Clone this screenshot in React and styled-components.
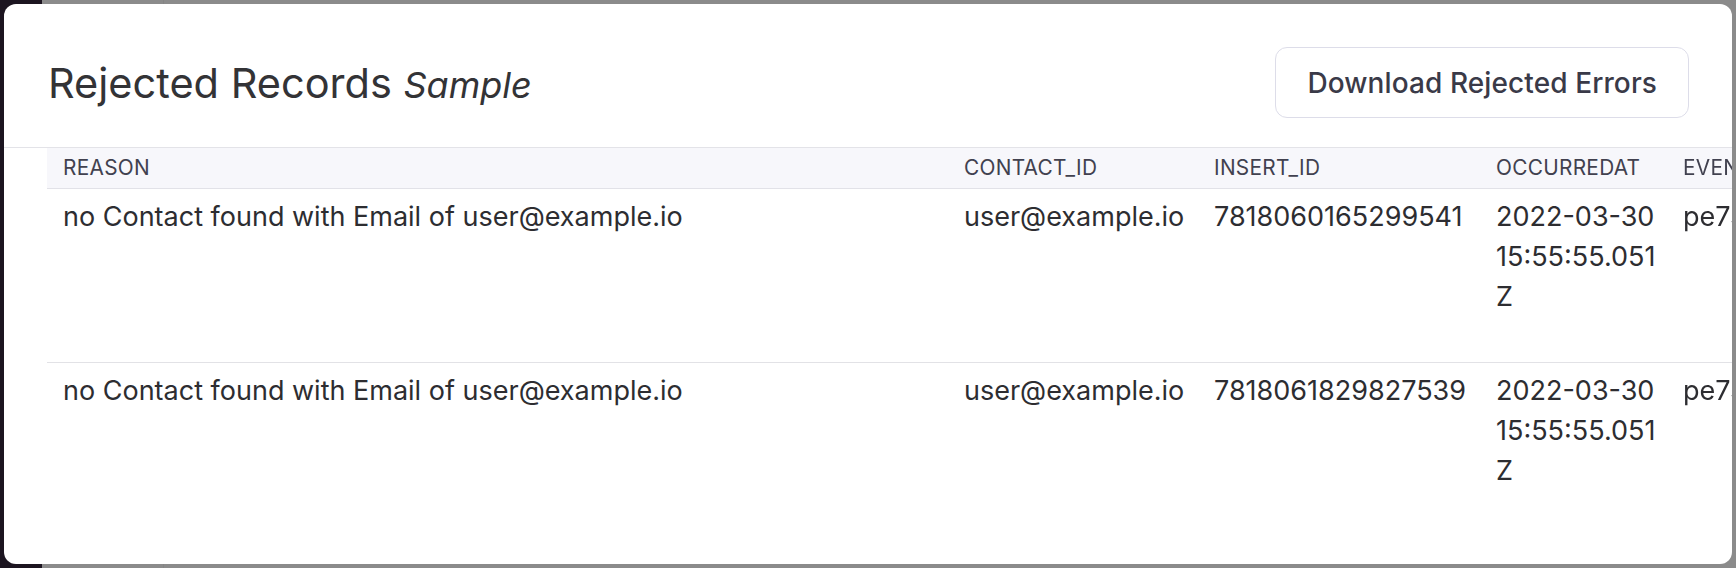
import React from "react";
import styled, { createGlobalStyle } from "styled-components";

const GlobalStyle = createGlobalStyle`
  html, body {
    margin: 0;
    padding: 0;
  }
  body {
    background: #8b8b8b;
    font-family: Inter, "Noto Sans", sans-serif;
    overflow: hidden;
  }
`;

const Backdrop = styled.div`
  width: 100vw;
  height: 100vh;
  display: flex;
  overflow: hidden;
`;
const Sidebar = styled.div`
  width: 42px;
  flex-shrink: 0;
  background: #1c1520;
`;
const BackContent = styled.div`
  flex: 1;
  margin-left: 121px;
  border-left: 1px solid #858585;
  display: flex;
  flex-direction: column;
  justify-content: space-between;
`;
const BackRow = styled.div`
  display: flex;
  gap: 66px;
  padding-left: 21px;
  font-size: 27px;
  line-height: 32px;
  color: #2a2a2a;
  margin-top: ${(p) => (p.$top ? "-27px" : "0")};
  margin-bottom: ${(p) => (p.$top ? "0" : "-27px")};
`;

const Modal = styled.div`
  position: fixed;
  top: 4px;
  left: 4px;
  right: 4px;
  bottom: 4px;
  background: #ffffff;
  border-radius: 12px;
  overflow: hidden;
`;
const ModalHeader = styled.div`
  box-sizing: border-box;
  height: 144px;
  display: flex;
  align-items: center;
  justify-content: space-between;
  padding: 14px 43px 0 44px;
  border-bottom: 1px solid #e3e3e8;
`;
const Title = styled.h2`
  margin: 0;
  font-size: 41.5px;
  font-weight: 400;
  color: #333336;
  em {
    font-style: italic;
    font-size: 36px;
  }
`;
const Button = styled.button`
  height: 71px;
  padding: 0 31px;
  background: #ffffff;
  border: 1px solid #dddde9;
  border-radius: 12px;
  font-family: inherit;
  font-size: 28px;
  font-weight: 500;
  letter-spacing: 0.1px;
  color: #3a3a48;
  cursor: pointer;
`;

const TableWrap = styled.div`
  padding-left: 43px;
  overflow: hidden;
`;
const Table = styled.table`
  border-collapse: collapse;
  table-layout: fixed;
  width: 1980px;
`;
const Th = styled.th`
  box-sizing: border-box;
  width: ${(p) => p.$width}px;
  height: 40px;
  padding: 0 16px;
  background: #f7f7fb;
  border-bottom: 1px solid #e2e2e8;
  text-align: left;
  font-size: 20.8px;
  font-weight: 400;
  letter-spacing: 0.3px;
  color: #41414f;
  white-space: nowrap;
  overflow: hidden;
`;
const Row = styled.tr`
  &:last-child td {
    border-bottom: none;
  }
`;
const Td = styled.td`
  padding: 8px ${(p) => (p.$wrap ? 6 : 16)}px 45px 16px;
  vertical-align: top;
  border-bottom: 1px solid #e2e2e6;
  font-size: 27px;
  line-height: 40px;
  color: #2d2d31;
  white-space: ${(p) => (p.$wrap ? "normal" : "nowrap")};
  overflow-wrap: ${(p) => (p.$wrap ? "anywhere" : "normal")};
  overflow: hidden;
`;
const Stamp = styled.span`
  white-space: nowrap;
`;

const columns = [
  { key: "reason", label: "REASON", width: 901 },
  { key: "contact", label: "CONTACT_ID", width: 250 },
  { key: "insert", label: "INSERT_ID", width: 282 },
  { key: "occurred", label: "OCCURREDAT", width: 187, wrap: true },
  { key: "event", label: "EVENT_ID", width: 360 },
];

const rows = [
  {
    reason: "no Contact found with Email of user@example.io",
    contact: "user@example.io",
    insert: "7818060165299541",
    occurred: "2022-03-30 15:55:55.051Z",
    event: "pe73b9c1f0e2a4d",
  },
  {
    reason: "no Contact found with Email of user@example.io",
    contact: "user@example.io",
    insert: "7818061829827539",
    occurred: "2022-03-30 15:55:55.051Z",
    event: "pe73b9c1f0e2a4e",
  },
];

// the date part never breaks at its hyphens; the time may break before the Z
function renderCell(key, value) {
  if (key !== "occurred") return value;
  const [date, time] = value.split(" ");
  return (
    <>
      <Stamp>{date}</Stamp> {time}
    </>
  );
}

export default function App() {
  return (
    <>
      <GlobalStyle />
      <Backdrop>
        <Sidebar />
        <BackContent>
          <BackRow $top>
            <span>10:31 AM EDT</span>
          </BackRow>
          <BackRow>
            <span>10:46 PM EDT</span>
            <span>330</span>
          </BackRow>
        </BackContent>
      </Backdrop>
      <Modal>
        <ModalHeader>
          <Title>
            Rejected Records <em>Sample</em>
          </Title>
          <Button>Download Rejected Errors</Button>
        </ModalHeader>
        <TableWrap>
          <Table>
            <thead>
              <tr>
                {columns.map((c) => (
                  <Th key={c.key} $width={c.width}>
                    {c.label}
                  </Th>
                ))}
              </tr>
            </thead>
            <tbody>
              {rows.map((r) => (
                <Row key={r.insert}>
                  {columns.map((c) => (
                    <Td key={c.key} $wrap={c.wrap}>
                      {renderCell(c.key, r[c.key])}
                    </Td>
                  ))}
                </Row>
              ))}
            </tbody>
          </Table>
        </TableWrap>
      </Modal>
    </>
  );
}
